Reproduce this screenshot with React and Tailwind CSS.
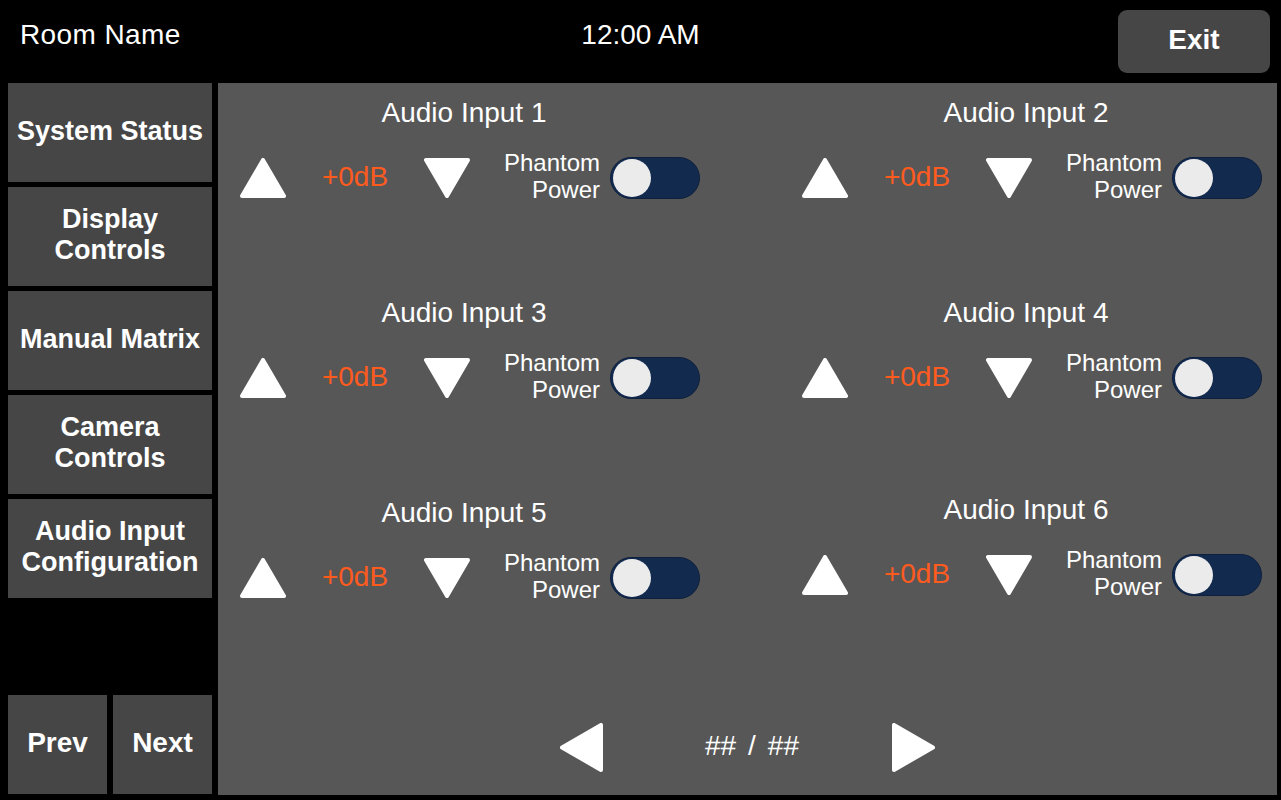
import React from 'react';

const font = { fontFamily: '"Liberation Sans", Arial, sans-serif' };

const navItems = [
  ['System Status'],
  ['Display', 'Controls'],
  ['Manual Matrix'],
  ['Camera', 'Controls'],
  ['Audio Input', 'Configuration'],
];

const inputs = [
  { name: 'Audio Input 1', shift: '' },
  { name: 'Audio Input 2', shift: '' },
  { name: 'Audio Input 3', shift: '' },
  { name: 'Audio Input 4', shift: '' },
  { name: 'Audio Input 5', shift: '' },
  { name: 'Audio Input 6', shift: '-mt-[3px]' },
];

function UpArrow() {
  return (
    <svg width="46" height="40" viewBox="0 0 46 40">
      <polygon points="23,2 44,38 2,38" fill="#fff" stroke="#fff" strokeWidth="4" strokeLinejoin="round" />
    </svg>
  );
}

function DownArrow() {
  return (
    <svg width="46" height="40" viewBox="0 0 46 40">
      <polygon points="2,2 44,2 23,38" fill="#fff" stroke="#fff" strokeWidth="4" strokeLinejoin="round" />
    </svg>
  );
}

function PageArrow({ dir }) {
  const pts = dir === 'left' ? '2,24.5 41,2 41,47' : '2,2 2,47 41,24.5';
  return (
    <svg width="43" height="49" viewBox="0 0 43 49">
      <polygon points={pts} fill="#fff" stroke="#fff" strokeWidth="4" strokeLinejoin="round" />
    </svg>
  );
}

function Toggle() {
  return (
    <div className="w-[90px] h-[42px] rounded-full bg-[#132a4f] border border-[#0e203d] flex items-center pl-[2px]">
      <div className="w-[38px] h-[38px] rounded-full bg-[#ebebeb]" />
    </div>
  );
}

function AudioInput({ name, shift }) {
  return (
    <div className={`h-[200px] flex flex-col ${shift}`}>
      {/* title */}
      <div className="h-[32px] leading-[32px] text-[28px] text-white text-center pr-[12px]">{name}</div>

      {/* controls */}
      <div className="mt-[28px] h-[42px] flex items-center">
        <UpArrow />
        <div className="w-[138px] text-center text-[28px] leading-[32px] text-[#ff5b1f] pb-[2px]">+0dB</div>
        <DownArrow />
        <div className="flex-1 text-right text-[24px] leading-[27px] text-white pr-[10px] pb-[4px]">
          <div>Phantom</div>
          <div>Power</div>
        </div>
        <Toggle />
      </div>
    </div>
  );
}

export default function App() {
  return (
    <div className="w-[1281px] h-[800px] bg-black flex flex-col overflow-hidden" style={font}>
      {/* Header */}
      <div className="h-[83px] grid grid-cols-[1fr_auto_1fr] items-start">
        <div className="pl-[20px] mt-[19px] text-[28px] leading-[32px] text-white tracking-[0.4px]">Room Name</div>
        <div className="mt-[19px] text-[28px] leading-[32px] text-white">12:00 AM</div>
        <div className="flex justify-end pr-[11px]">
          <button className="mt-[10px] w-[152px] h-[63px] rounded-[9px] bg-[#464646] text-white font-bold text-[28px] pb-[3px]">
            Exit
          </button>
        </div>
      </div>

      {/* Body */}
      <div className="flex-1 flex pl-[8px] pb-[5px] gap-[6px]">
        {/* Sidebar */}
        <div className="w-[204px] flex flex-col gap-[5px] pb-[1px]">
          {navItems.map((lines) => (
            <button
              key={lines.join(' ')}
              className="h-[99px] bg-[#464646] text-white font-bold text-[27px] leading-[31px] flex flex-col items-center justify-center pb-[3px]"
            >
              {lines.map((l) => (
                <span key={l}>{l}</span>
              ))}
            </button>
          ))}
          <div className="mt-auto flex gap-[6px]">
            <button className="w-[99px] h-[99px] bg-[#464646] text-white font-bold text-[28px] pb-[4px]">Prev</button>
            <button className="w-[99px] h-[99px] bg-[#464646] text-white font-bold text-[28px] pb-[4px]">Next</button>
          </div>
        </div>

        {/* Main panel */}
        <div className="w-[1059px] bg-[#575757] flex flex-col">
          <div className="pt-[14px] pl-[22px] grid grid-cols-[460px_460px] gap-x-[102px]">
            {inputs.map((inp) => (
              <AudioInput key={inp.name} {...inp} />
            ))}
          </div>

          {/* Pager */}
          <div className="mt-auto pb-[23px] flex items-center justify-center">
            <PageArrow dir="left" />
            <div className="ml-[102px] mr-[93px] w-[94px] flex justify-between text-[28px] leading-[32px] text-white pb-[4px]">
              <span>##</span>
              <span>/</span>
              <span>##</span>
            </div>
            <PageArrow dir="right" />
          </div>
        </div>
      </div>
    </div>
  );
}
